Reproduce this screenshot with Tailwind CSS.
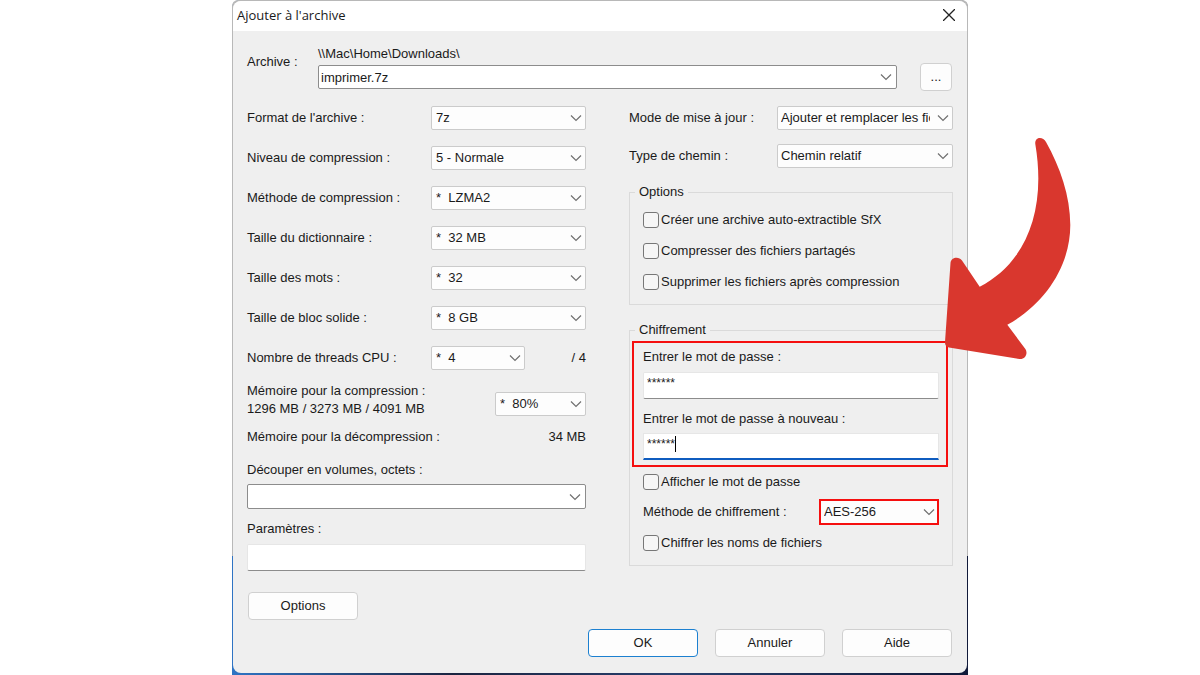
<!DOCTYPE html>
<html lang="fr">
<head>
<meta charset="utf-8">
<meta name="viewport" content="width=device-width, initial-scale=1">
<title>Ajouter à l'archive</title>
<script src="https://cdn.jsdelivr.net/npm/@tailwindcss/browser@4"></script>
</head>
<body class="min-h-screen bg-white font-['Liberation_Sans',sans-serif] text-[13px] leading-4 text-[#1a1a1a]">
<svg class="hidden"><symbol id="chev" viewBox="0 0 12 12"><path d="M1 3.500 6 8.500 11 3.500" fill="none" stroke="#707070" stroke-width="1.200"/></symbol></svg>
<div class="relative mx-auto w-full max-w-[736px] rounded-t-lg bg-[linear-gradient(to_right,#2f74c4,#1b2440_30%,#28406e_60%,#111a3a)] px-px pt-px pb-0.5">
  <div class="absolute inset-x-0 top-0 h-[556px] rounded-t-md bg-[#b8b8b8]"></div>
  <main class="relative rounded-lg bg-[#efefef]">
    <header class="flex h-[30px] items-center justify-between rounded-t-lg bg-white pr-2.5 pb-0.5 pl-1">
      <h1 class="font-['Open_Sans',sans-serif] text-[13px]">Ajouter à l'archive</h1>
      <button aria-label="Fermer" class="p-0.5"><svg class="size-3" viewBox="0 0 12 12"><path d="M0 0 12 12M12 0 0 12" stroke="#222" stroke-width="1.300"/></svg></button>
    </header>
    <div class="px-3.5 pb-4">
      <div class="flex items-start pt-[15px]">
        <label for="arc" class="w-[71px] pt-2">Archive :</label>
        <div class="flex-1">
          <div>\\Mac\Home\Downloads\</div>
          <div class="mt-[3px] flex h-6 items-center rounded-xs border border-[#8c8c8c] bg-white">
            <input id="arc" value="imprimer.7z" class="h-full min-w-0 flex-1 px-0.5 outline-none">
            <button aria-label="Archives récentes" class="px-1"><svg class="size-3"><use href="#chev"/></svg></button>
          </div>
        </div>
        <button aria-label="Parcourir" class="-mb-0.5 mr-px ml-[23px] h-7 w-8 self-end rounded border border-[#d0d0d0] bg-[#fdfdfd]">...</button>
      </div>

      <div class="flex gap-[43px] pt-[9px]">
        <section class="w-[339px] shrink-0">
          <div class="flex h-10 items-center justify-between">
            <label for="f1">Format de l'archive :</label>
            <div class="relative w-[155px]"><select id="f1" class="block h-6 w-full appearance-none rounded-xs border border-[#cbcbcb] bg-[#fdfdfd] pr-6 pl-1"><option>7z</option></select><svg class="pointer-events-none absolute top-1.5 right-1 size-3"><use href="#chev"/></svg></div>
          </div>
          <div class="flex h-10 items-center justify-between">
            <label for="f2">Niveau de compression :</label>
            <div class="relative w-[155px]"><select id="f2" class="block h-6 w-full appearance-none rounded-xs border border-[#cbcbcb] bg-[#fdfdfd] pr-6 pl-1"><option>5 - Normale</option></select><svg class="pointer-events-none absolute top-1.5 right-1 size-3"><use href="#chev"/></svg></div>
          </div>
          <div class="flex h-10 items-center justify-between">
            <label for="f3">Méthode de compression :</label>
            <div class="relative w-[155px]"><select id="f3" class="block h-6 w-full appearance-none rounded-xs border border-[#cbcbcb] bg-[#fdfdfd] pr-6 pl-1"><option>*&nbsp;&nbsp;LZMA2</option></select><svg class="pointer-events-none absolute top-1.5 right-1 size-3"><use href="#chev"/></svg></div>
          </div>
          <div class="flex h-10 items-center justify-between">
            <label for="f4">Taille du dictionnaire :</label>
            <div class="relative w-[155px]"><select id="f4" class="block h-6 w-full appearance-none rounded-xs border border-[#cbcbcb] bg-[#fdfdfd] pr-6 pl-1"><option>*&nbsp;&nbsp;32 MB</option></select><svg class="pointer-events-none absolute top-1.5 right-1 size-3"><use href="#chev"/></svg></div>
          </div>
          <div class="flex h-10 items-center justify-between">
            <label for="f5">Taille des mots :</label>
            <div class="relative w-[155px]"><select id="f5" class="block h-6 w-full appearance-none rounded-xs border border-[#cbcbcb] bg-[#fdfdfd] pr-6 pl-1"><option>*&nbsp;&nbsp;32</option></select><svg class="pointer-events-none absolute top-1.5 right-1 size-3"><use href="#chev"/></svg></div>
          </div>
          <div class="flex h-10 items-center justify-between">
            <label for="f6">Taille de bloc solide :</label>
            <div class="relative w-[155px]"><select id="f6" class="block h-6 w-full appearance-none rounded-xs border border-[#cbcbcb] bg-[#fdfdfd] pr-6 pl-1"><option>*&nbsp;&nbsp;8 GB</option></select><svg class="pointer-events-none absolute top-1.5 right-1 size-3"><use href="#chev"/></svg></div>
          </div>
          <div class="flex h-10 items-center justify-between">
            <label for="f7">Nombre de threads CPU :</label>
            <div class="flex w-[155px] items-center justify-between">
              <div class="relative w-[94px]"><select id="f7" class="block h-6 w-full appearance-none rounded-xs border border-[#cbcbcb] bg-[#fdfdfd] pr-6 pl-1"><option>*&nbsp;&nbsp;4</option></select><svg class="pointer-events-none absolute top-1.5 right-1 size-3"><use href="#chev"/></svg></div>
              <span>/ 4</span>
            </div>
          </div>
          <div class="flex items-end justify-between pt-1">
            <label for="f8" class="leading-[18px]">Mémoire pour la compression :<br>1296 MB / 3273 MB / 4091 MB</label>
            <div class="relative mb-0.5 w-[91px]"><select id="f8" class="block h-6 w-full appearance-none rounded-xs border border-[#cbcbcb] bg-[#fdfdfd] pr-6 pl-1"><option>*&nbsp;&nbsp;80%</option></select><svg class="pointer-events-none absolute top-1.5 right-1 size-3"><use href="#chev"/></svg></div>
          </div>
          <div class="flex justify-between pt-[11px]"><span>Mémoire pour la décompression :</span><span>34 MB</span></div>
          <label for="vol" class="block pt-[17px]">Découper en volumes, octets :</label>
          <div class="mt-1.5 flex h-[25px] items-center rounded-xs border border-[#8c8c8c] bg-white">
            <input id="vol" class="h-full min-w-0 flex-1 px-0.5 outline-none">
            <button aria-label="Tailles de volume" class="px-1"><svg class="size-3"><use href="#chev"/></svg></button>
          </div>
          <label for="par" class="block pt-3">Paramètres :</label>
          <input id="par" class="mt-[7px] block h-[27px] w-full rounded-xs border border-[#e6e6e6] border-b-[#8c8c8c] bg-white px-1">
          <button class="mt-[21px] ml-px h-7 w-[110px] rounded border border-[#d0d0d0] bg-[#fdfdfd]">Options</button>
        </section>

        <section class="min-w-0 flex-1">
          <div class="flex h-10 items-center justify-between">
            <label for="g1">Mode de mise à jour :</label>
            <div class="relative w-[176px]"><select id="g1" class="block h-6 w-full appearance-none rounded-xs border border-[#cbcbcb] bg-[#fdfdfd] pr-[22px] pl-[3px]"><option>Ajouter et remplacer les fichiers</option></select><svg class="pointer-events-none absolute top-1.5 right-1 size-3"><use href="#chev"/></svg></div>
          </div>
          <div class="flex h-9 items-center justify-between">
            <label for="g2">Type de chemin :</label>
            <div class="relative w-[176px]"><select id="g2" class="block h-6 w-full appearance-none rounded-xs border border-[#cbcbcb] bg-[#fdfdfd] pr-[22px] pl-[3px]"><option>Chemin relatif</option></select><svg class="pointer-events-none absolute top-1.5 right-1 size-3"><use href="#chev"/></svg></div>
          </div>
          <fieldset class="mt-2.5 border border-[#dadada] px-[13px] pb-3.5">
            <legend class="-ml-2 px-1">Options</legend>
            <div class="flex flex-col gap-[15px] pt-3">
              <label class="flex items-center gap-0.5"><input type="checkbox" class="size-4 appearance-none rounded-[3px] border border-[#777] bg-[#f6f6f6]">Créer une archive auto-extractible SfX</label>
              <label class="flex items-center gap-0.5"><input type="checkbox" class="size-4 appearance-none rounded-[3px] border border-[#777] bg-[#f6f6f6]">Compresser des fichiers partagés</label>
              <label class="flex items-center gap-0.5"><input type="checkbox" class="size-4 appearance-none rounded-[3px] border border-[#777] bg-[#f6f6f6]">Supprimer les fichiers après compression</label>
            </div>
          </fieldset>
          <fieldset class="mt-[17px] border border-[#dadada] pb-3.5">
            <legend class="ml-[5px] px-1">Chiffrement</legend>
            <div class="mt-[3px] mr-1 ml-0.5 border-2 border-[#f50f0f] pt-1.5 pr-[7px] pb-[5px] pl-[9px]">
              <label for="p1" class="block">Entrer le mot de passe :</label>
              <input id="p1" autocomplete="off" value="******" class="mt-[7px] block h-[27px] w-full rounded-xs border border-[#e6e6e6] border-b-[#8c8c8c] bg-white px-[3px] pb-1.5 text-xs">
              <label for="p2" class="block pt-3">Entrer le mot de passe à nouveau :</label>
              <div class="relative mt-1.5">
                <input id="p2" autocomplete="off" value="******" class="block h-[27px] w-full border border-[#e6e6e6] border-b-2 border-b-[#0f5cbf] bg-white px-[3px] pb-1 text-xs">
                <span class="absolute top-[3px] left-8 h-4 w-px bg-black"></span>
              </div>
            </div>
            <div class="px-[13px] pt-[7px]">
              <label class="flex items-center gap-0.5"><input type="checkbox" class="size-4 appearance-none rounded-[3px] border border-[#777] bg-[#f6f6f6]">Afficher le mot de passe</label>
              <div class="flex items-center justify-between pt-[9px]">
                <label for="g3">Méthode de chiffrement :</label>
                <div class="relative w-[120px]"><select id="g3" class="block h-[26px] w-full appearance-none border-2 border-[#f50f0f] bg-[#fdfdfd] pr-6 pl-[3px]"><option>AES-256</option></select><svg class="pointer-events-none absolute top-[7px] right-1 size-3"><use href="#chev"/></svg></div>
              </div>
              <label class="flex items-center gap-0.5 pt-2.5"><input type="checkbox" class="size-4 appearance-none rounded-[3px] border border-[#777] bg-[#f6f6f6]">Chiffrer les noms de fichiers</label>
            </div>
          </fieldset>
        </section>
      </div>
      <div class="mr-px flex justify-end gap-[17px] pt-[9px]">
        <button class="h-7 w-[110px] rounded border border-[#1c80d0] bg-[#fdfdfd]">OK</button>
        <button class="h-7 w-[110px] rounded border border-[#d0d0d0] bg-[#fdfdfd]">Annuler</button>
        <button class="h-7 w-[110px] rounded border border-[#d0d0d0] bg-[#fdfdfd]">Aide</button>
      </div>
    </div>
  </main>
  <svg class="pointer-events-none absolute top-[136px] left-[711px] h-[226px] w-[130px]" viewBox="943 136 130 226" aria-hidden="true">
    <path fill="#d9372e" d="M1035.300 144C1034.500 136.500 1043 136 1046 142C1060 167 1070.300 196 1070.300 225C1070.300 266 1045 304 1007.300 324.700L1025 348.500C1028.500 353 1025.500 359.500 1019.500 359L949 347.500C946 347 944.800 345 945 342L950.500 263C951 257.500 958.500 256 962 260.500L979.700 286.700C1024 264 1047 213 1035.300 144Z"/>
  </svg>
</div>
</body>
</html>
